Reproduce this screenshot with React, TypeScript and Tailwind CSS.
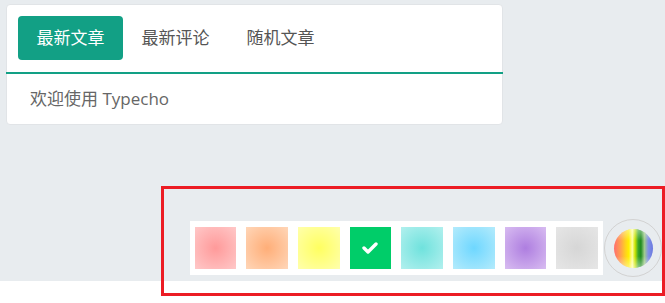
import React from "react";

const swatches = [
  "bg-[radial-gradient(circle,#ff9a9a_0%,#ffc8c8_100%)]",
  "bg-[radial-gradient(circle,#ffae78_0%,#ffd6b8_100%)]",
  "bg-[radial-gradient(circle,#ffff60_0%,#ffffac_100%)]",
  "bg-[#00cd69]",
  "bg-[radial-gradient(circle,#6fe2dd_0%,#b2f0ee_100%)]",
  "bg-[radial-gradient(circle,#6ed7ff_0%,#b4ebfc_100%)]",
  "bg-[radial-gradient(circle,#ae7ee0_0%,#d8bcf1_100%)]",
  "bg-[radial-gradient(circle,#d6d6d6_0%,#e6e6e6_100%)]",
];

export default function App() {
  return (
    <div
      className="relative w-[665px] h-[303px] bg-white overflow-hidden"
      style={{ fontFamily: '"Open Sans", "Noto Sans CJK SC", sans-serif' }}
    >
      <div className="h-[281px] bg-[#e8ecef] pt-[4px] pl-[6px] flex flex-col">
        <div className="w-[497px] bg-white rounded-[4px] border border-[#e1e4e7]">
          <div className="flex px-[11px] pt-[11px] pb-[12px]">
            <div className="w-[105px] h-[44px] rounded-[4px] bg-[#12a085] text-white text-[17px] flex items-center justify-center">
              最新文章
            </div>
            <div className="w-[105px] h-[44px] text-[#555] text-[17px] flex items-center justify-center">
              最新评论
            </div>
            <div className="w-[105px] h-[44px] text-[#555] text-[17px] flex items-center justify-center">
              随机文章
            </div>
          </div>
          <div className="h-[2px] bg-[#12a085] -mx-px" />
          <div className="h-[50px] px-[23px] flex items-center text-[17px] text-[#666]">
            欢迎使用 Typecho
          </div>
        </div>
        <div className="mt-auto flex justify-end items-center pr-[3px] pb-[4px]">
          <div className="flex bg-white py-[6px]">
            {swatches.map((c, i) => (
              <div
                key={i}
                className={`w-[41.7px] h-[42px] mx-[5px] flex items-center justify-center ${c}`}
              >
                {i === 3 && (
                  <svg width="16" height="12" viewBox="0 0 16 12">
                    <polyline
                      points="2,6 6,10 14,2"
                      fill="none"
                      stroke="white"
                      strokeWidth="3.4"
                      strokeLinecap="round"
                      strokeLinejoin="round"
                    />
                  </svg>
                )}
              </div>
            ))}
          </div>
          <div className="ml-[1px] w-[58px] h-[58px] rounded-full border border-[#d2d2d2] flex items-center justify-center">
            <div className="relative w-[39px] h-[39px] rounded-full overflow-hidden bg-[linear-gradient(90deg,#ff6e6e_0%,#ffa050_17%,#ffd020_29%,#fff000_38%,#ffffa0_47%,#cce400_54%,#3aa52a_62%,#1e8a1e_69%,#a0cc8c_78%,#8090e6_88%,#6a78e0_100%)]">
              <div className="absolute inset-0 bg-[linear-gradient(180deg,rgba(255,255,255,0.45)_0%,rgba(255,255,255,0)_30%,rgba(255,255,255,0)_70%,rgba(255,255,255,0.45)_100%)]" />
            </div>
          </div>
        </div>
      </div>
      <div className="absolute left-[161px] top-[186px] w-[504px] h-[110px] border-[3px] border-[#ec1c24]" />
    </div>
  );
}
